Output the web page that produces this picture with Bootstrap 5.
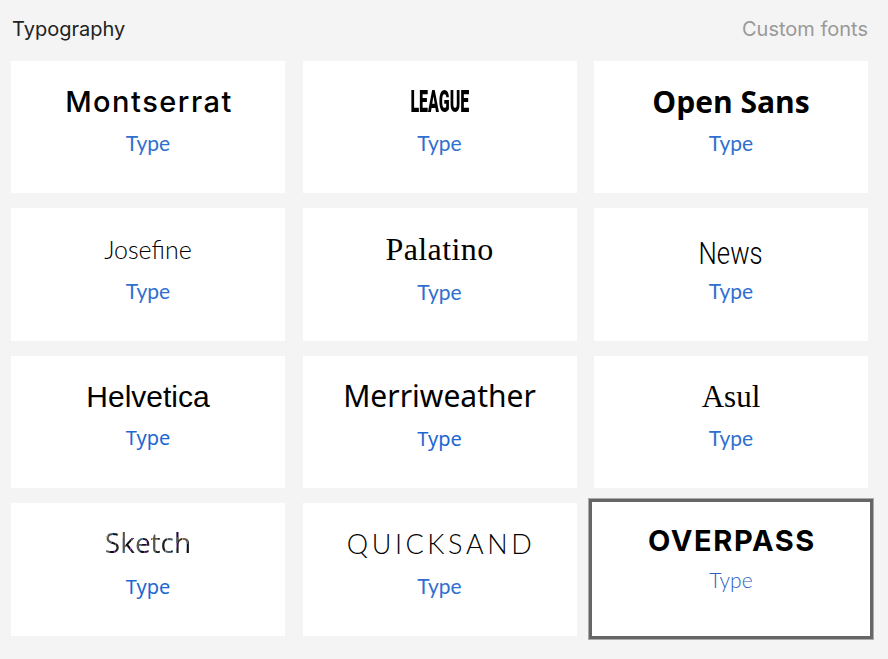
<!DOCTYPE html>
<html lang="en">

<head>
    <meta charset="UTF-8">
    <meta name="viewport" content="width=device-width, initial-scale=1.0">
    <title>Typography</title>

    <link href="https://cdn.jsdelivr.net/npm/bootstrap@5.3.0/dist/css/bootstrap.min.css" rel="stylesheet">
    <script src="https://cdn.jsdelivr.net/npm/bootstrap@5.3.0/dist/js/bootstrap.bundle.min.js"></script>

    <style>
        body { background: #f4f4f4; font-family: "Inter", sans-serif; }
        .type-page { width: 888px; height: 659px; padding: 15px 20px 0 11px; }
        .type-head { height: 27px; margin-bottom: 19px; padding-left: 1px; }
        .type-title { font-size: 20px; color: #222; }
        .type-custom { font-size: 20px; color: #999; }
        .type-grid { display: grid; grid-template-columns: repeat(3, 274px); grid-template-rows: 132px 133px 132px 133px; column-gap: 17.5px; row-gap: 15px; }
        .type-tile { background: #fff; padding-top: 20px; color: #000; }
        .type-tile.is-active { margin: 1px 0 2px; padding-top: 16px; box-shadow: 0 0 0 2px #fff, 0 0 0 5px #666, 0 0 0 6px #aaa; }
        .type-name { height: 41px; line-height: 41px; white-space: nowrap; }
        .type-sub { font-family: "Lato", sans-serif; font-size: 21px; line-height: 26px; color: #2f6fd0; margin-top: 8px; }
        .type-sub.sub-mid { margin-top: 9px; }
        .type-sub.sub-low { margin-top: 10px; }
        .type-sub.sub-strong { font-family: "Noto Sans", sans-serif; font-size: 20px; color: #1c68d2; }
        .type-sub.sub-thin { font-weight: 300; color: #2f5fc0; margin-top: 6px; }
        .f-mont { font-family: "Inter", sans-serif; font-size: 29px; font-weight: 500; letter-spacing: 1.5px; padding-left: 2px; }
        .f-league { font-family: "Roboto", sans-serif; font-size: 32px; font-weight: 900; display: inline-block; transform: scaleX(.5); }
        .f-open { font-family: "Open Sans", sans-serif; font-size: 30px; font-weight: 700; }
        .f-jose { font-family: "Lato", sans-serif; font-size: 25px; font-weight: 300; display: inline-block; transform: translateY(1px); }
        .f-pal { font-family: "Liberation Serif", serif; font-size: 32px; letter-spacing: .4px; display: inline-block; transform: translateY(1px); }
        .f-news { font-family: "Roboto", sans-serif; font-size: 31px; font-weight: 300; display: inline-block; transform: translateY(5px) scaleX(.83); }
        .f-helv { font-family: "Liberation Sans", sans-serif; font-size: 30px; }
        .f-merri { font-family: "Noto Sans", sans-serif; font-size: 30px; display: inline-block; transform: translateY(-1px); }
        .f-asul { font-family: "Liberation Serif", serif; font-size: 31px; }
        .f-sketch { font-family: "Open Sans", sans-serif; font-size: 28px; background: repeating-linear-gradient(100deg, #222 0 4px, #c58a3c 4px 5px, #555 5px 9px, #2a6fb0 9px 10px, #111 10px 14px, #7a3aa0 14px 15px); -webkit-background-clip: text; background-clip: text; color: transparent; display: inline-block; transform: translateY(-1px); }
        .f-quick { font-family: "Lato", sans-serif; font-size: 27px; font-weight: 300; letter-spacing: 3.6px; padding-left: 3px; }
        .f-over { font-family: "Inter", sans-serif; font-size: 29px; font-weight: 700; letter-spacing: 1.6px; padding-left: 2px; }
    </style>
</head>

<body>
    <div class="type-page">
        <div class="type-head d-flex justify-content-between align-items-center">
            <span class="type-title">Typography</span>
            <span class="type-custom">Custom fonts</span>
        </div>
        <div class="type-grid">
            <div class="type-tile text-center"><div class="type-name"><span class="f-mont">Montserrat</span></div><div class="type-sub">Type</div></div>
            <div class="type-tile text-center"><div class="type-name"><span class="f-league">LEAGUE</span></div><div class="type-sub">Type</div></div>
            <div class="type-tile text-center"><div class="type-name"><span class="f-open">Open Sans</span></div><div class="type-sub">Type</div></div>
            <div class="type-tile text-center"><div class="type-name"><span class="f-jose">Josefine</span></div><div class="type-sub sub-mid">Type</div></div>
            <div class="type-tile text-center"><div class="type-name"><span class="f-pal">Palatino</span></div><div class="type-sub sub-low">Type</div></div>
            <div class="type-tile text-center"><div class="type-name"><span class="f-news">News</span></div><div class="type-sub sub-mid">Type</div></div>
            <div class="type-tile text-center"><div class="type-name"><span class="f-helv">Helvetica</span></div><div class="type-sub sub-strong">Type</div></div>
            <div class="type-tile text-center"><div class="type-name"><span class="f-merri">Merriweather</span></div><div class="type-sub sub-strong sub-mid">Type</div></div>
            <div class="type-tile text-center"><div class="type-name"><span class="f-asul">Asul</span></div><div class="type-sub">Type</div></div>
            <div class="type-tile text-center"><div class="type-name"><span class="f-sketch">Sketch</span></div><div class="type-sub sub-strong sub-low">Type</div></div>
            <div class="type-tile text-center"><div class="type-name"><span class="f-quick">QUICKSAND</span></div><div class="type-sub sub-mid">Type</div></div>
            <div class="type-tile text-center is-active"><div class="type-name"><span class="f-over">OVERPASS</span></div><div class="type-sub sub-thin">Type</div></div>
        </div>
    </div>
</body>

</html>
